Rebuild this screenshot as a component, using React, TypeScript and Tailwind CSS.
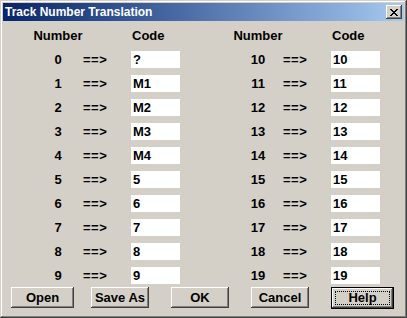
const rows: [number, string][] = [
  [0, '?'],
  [1, 'M1'],
  [2, 'M2'],
  [3, 'M3'],
  [4, 'M4'],
  [5, '5'],
  [6, '6'],
  [7, '7'],
  [8, '8'],
  [9, '9'],
]

const bevel =
  'shadow-[inset_-1px_-1px_#404040,inset_1px_1px_#ffffff,inset_-2px_-2px_#808080,inset_2px_2px_#d4d0c8]'

function Pair({ num, code, first }: { num: number; code: string; first?: boolean }) {
  return (
    <div className={`flex items-center ${first ? '' : 'ml-[58px]'}`}>
      <div className="w-[40px] flex justify-center">{num}</div>
      <div className="ml-[5px] w-[24px] tracking-[0.5px]">==&gt;</div>
      <div className="ml-[24px] w-[49px] h-[17px] bg-white pl-[2px] leading-[17px]">{code}</div>
    </div>
  )
}

function Header({ first }: { first?: boolean }) {
  return (
    <div className={`flex items-center ${first ? '' : 'ml-[58px]'}`}>
      <div className="w-[40px] flex justify-center whitespace-nowrap">Number</div>
      <div className="ml-[5px] w-[24px]" />
      <div className="ml-[24px] w-[49px] pl-[1px]">Code</div>
    </div>
  )
}

function Btn({ label, w, ml, def }: { label: string; w: string; ml: string; def?: boolean }) {
  if (def) {
    return (
      <div className={`${w} ${ml} h-[22px] border border-black`}>
        <div className={`h-full ${bevel} flex items-center justify-center p-[3px]`}>
          <div className="h-full w-full border border-dotted border-black flex items-center justify-center">
            {label}
          </div>
        </div>
      </div>
    )
  }
  return (
    <div className={`${w} ${ml} h-[21px] ${bevel} flex items-center justify-center`}>{label}</div>
  )
}

export default function App() {
  return (
    <div
      className="w-[407px] h-[318px] bg-[#d4d0c8] p-[3px] text-black font-bold text-[13px]
                 shadow-[inset_-1px_-1px_#404040,inset_1px_1px_#d4d0c8,inset_-2px_-2px_#808080,inset_2px_2px_#ffffff]
                 flex flex-col"
      style={{ fontFamily: '"Liberation Sans", Arial, sans-serif' }}
    >
      <div className="h-[18px] bg-gradient-to-r from-[#0a246a] to-[#a6caf0] flex items-center justify-between pl-[2px] pr-[2px]">
        <span className="text-white text-[12px]">Track Number Translation</span>
        <div className={`w-[16px] h-[14px] bg-[#d4d0c8] ${bevel} flex items-center justify-center`}>
          <svg width="8" height="7" viewBox="0 0 8 7" shapeRendering="crispEdges">
            <path d="M0 0h2v1H0zM6 0h2v1H6zM1 1h2v1H1zM5 1h2v1H5zM2 2h4v1H2zM3 3h2v1H3zM2 4h4v1H2zM1 5h2v1H1zM5 5h2v1H5zM0 6h2v1H0zM6 6h2v1H6z" fill="#000" />
          </svg>
        </div>
      </div>

      <div className="flex flex-col pl-[35px] mt-[6px] gap-[7px]">
        <div className="flex h-[17px]">
          <Header first />
          <Header />
        </div>
        {rows.map(([n, c]) => (
          <div key={n} className="flex h-[17px]">
            <Pair num={n} code={c} first />
            <Pair num={n + 10} code={String(n + 10)} />
          </div>
        ))}
      </div>

      <div className="flex items-start mt-[3px]">
        <Btn label="Open" w="w-[63px]" ml="ml-[8px]" />
        <Btn label="Save As" w="w-[58px]" ml="ml-[17px]" />
        <Btn label="OK" w="w-[58px]" ml="ml-[22px]" />
        <Btn label="Cancel" w="w-[58px]" ml="ml-[22px]" />
        <Btn label="Help" w="w-[63px]" ml="ml-[22px]" def />
      </div>
    </div>
  )
}
